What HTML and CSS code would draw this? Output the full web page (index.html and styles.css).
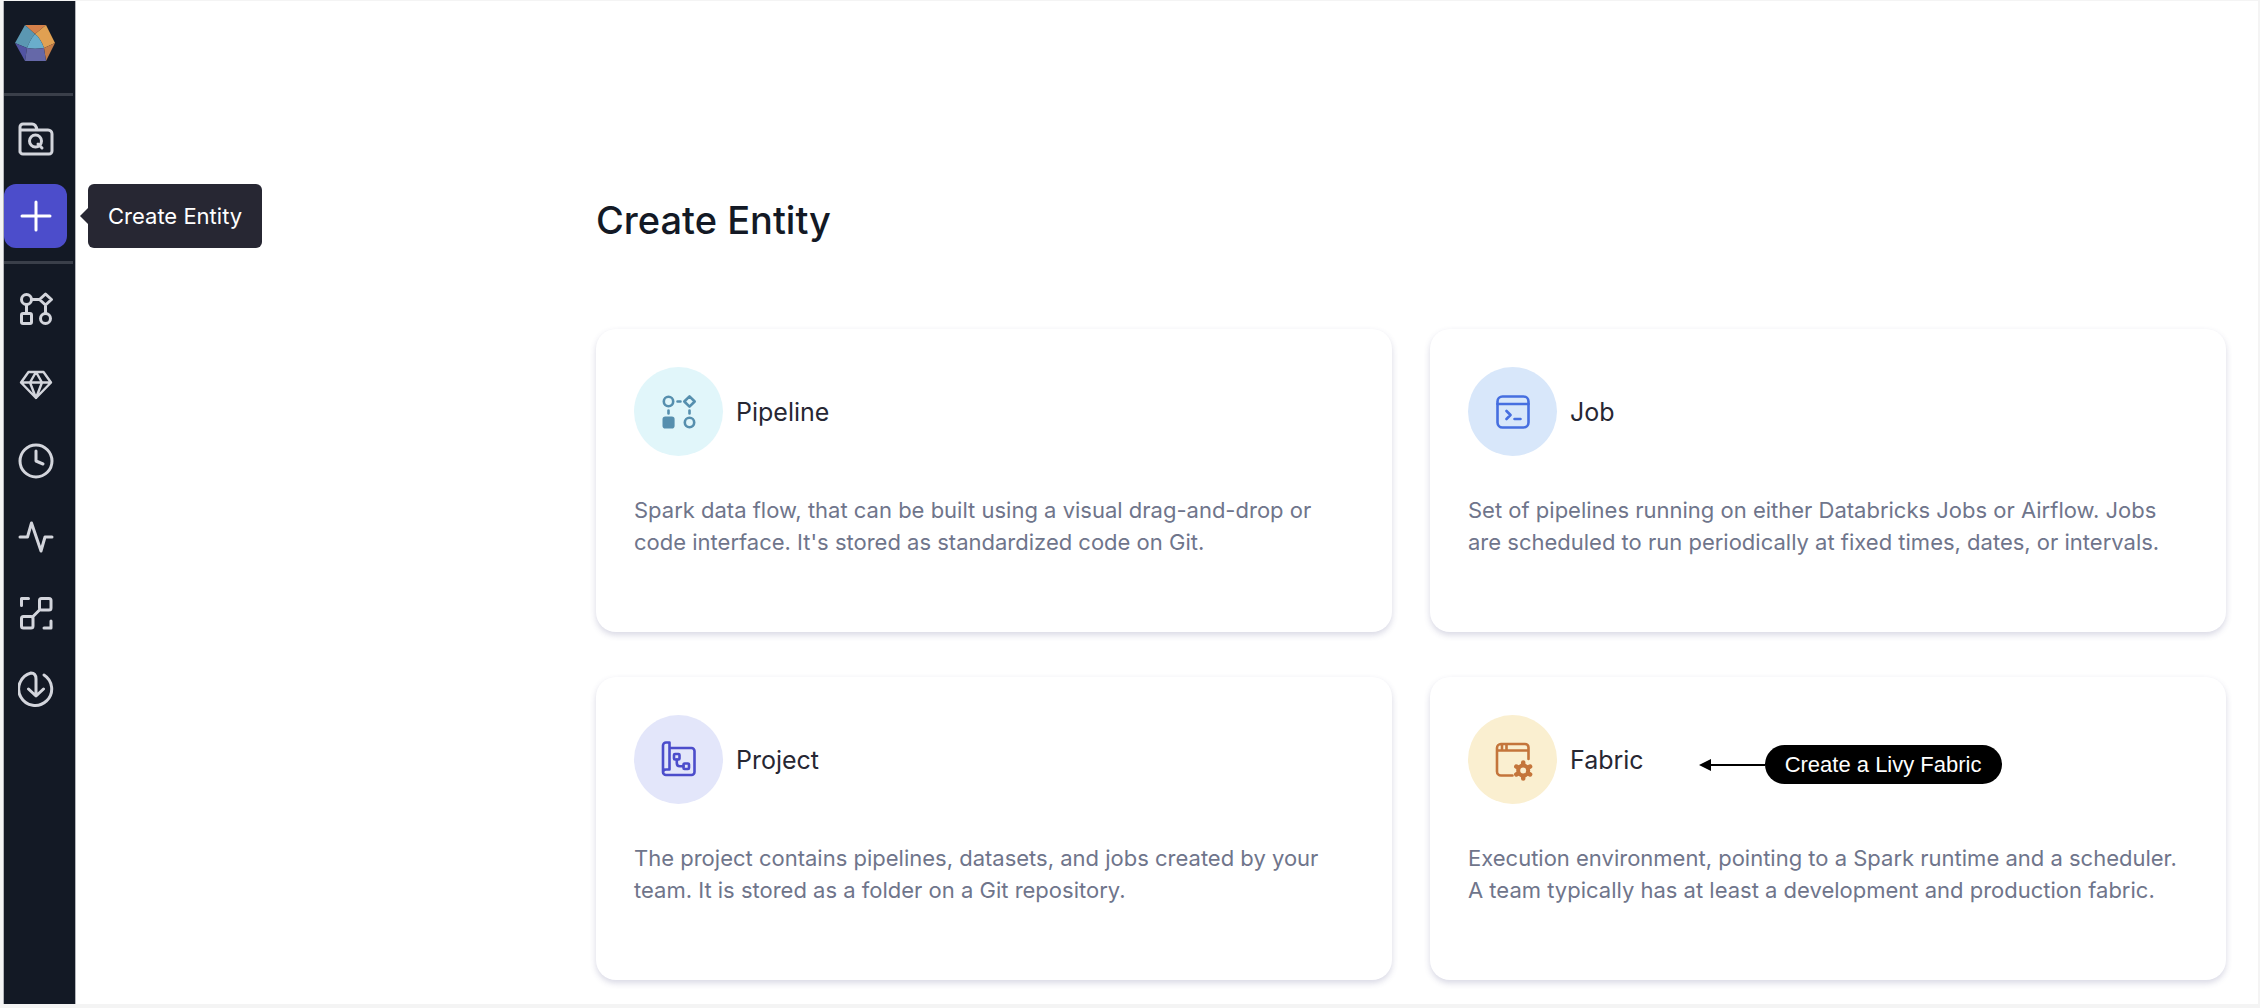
FILE: index.html
```html
<!DOCTYPE html>
<html lang="en">
<head>
<meta charset="utf-8">
<title>Create Entity</title>
<link rel="stylesheet" href="styles.css">
</head>
<body>
<div class="app">
  <nav class="sidebar" aria-label="Main">
    <a class="logo" href="#" aria-label="Home">
      <svg width="42" height="38" viewBox="0 0 42 38">
        <path fill="#d5804a" d="M11 1h21L21 10z"/>
        <path fill="#e0a052" d="M32 1l9 18-11 5C28 18 25 13 21 10z"/>
        <path fill="#c37c48" d="M41 19L32 37l-2-13z"/>
        <path fill="#5b97b2" d="M11 1l10 9c-4 4-6 9-8 14L1 19z"/>
        <path fill="#6aadcb" d="M21 10c4 3 7 8 9 14-6 1-12 1-17 0 2-5 4-10 8-14z"/>
        <path fill="#5254a2" d="M1 19l12 5-2 13z"/>
        <path fill="#6568a8" d="M13 24c5 1 11 1 17 0l2 13H11z"/>
      </svg>
    </a>
    <div class="nav-group">
      <a class="nav-item" href="#" aria-label="Browse">
        <svg class="nav-icon" viewBox="0 0 36 36"><path d="M2 30V5a3 3 0 0 1 3-3h9q4 0 5 6h11a4 4 0 0 1 4 4v17a3 3 0 0 1-3 3H5a3 3 0 0 1-3-3zM2 8h17"/><circle cx="17.500" cy="19" r="6"/><path d="M20 22l4 4"/></svg>
      </a>
      <button class="nav-item active" type="button" aria-label="Create" aria-describedby="create-tip">
        <svg class="nav-icon" viewBox="0 0 36 36"><path d="M18 4v28M4 18h28"/></svg>
        <span class="tooltip" id="create-tip" role="tooltip">Create Entity</span>
      </button>
    </div>
    <div class="nav-group">
      <a class="nav-item" href="#" aria-label="Pipelines">
        <svg class="nav-icon" viewBox="0 0 36 36"><circle cx="8.500" cy="8.500" r="5"/><circle cx="27.500" cy="27.500" r="5"/><rect x="3.500" y="22.500" width="10" height="10" rx="1.500"/><path d="M27.500 3l6 5.500-6 5.500-6-5.500zM13.500 8.500h8M8.500 13.500v9M27.500 14v8.500"/></svg>
      </a>
      <a class="nav-item" href="#" aria-label="Gems">
        <svg class="nav-icon thin" viewBox="0 0 36 36"><path d="M10.500 5h15L33 15.500 18 31 3 15.500zM3 15.500h30M18 5l-6 10.500L18 31l6-15.500z"/></svg>
      </a>
      <a class="nav-item" href="#" aria-label="Jobs">
        <svg class="nav-icon" viewBox="0 0 36 36"><circle cx="18" cy="18" r="16"/><path d="M18 8v10l7 3"/></svg>
      </a>
      <a class="nav-item" href="#" aria-label="Monitoring">
        <svg class="nav-icon" viewBox="0 0 36 36"><path d="M2 18h7.500L13.500 4 23 32l4-14h7"/></svg>
      </a>
      <a class="nav-item" href="#" aria-label="Lineage">
        <svg class="nav-icon" viewBox="0 0 36 36"><rect x="21.500" y="3.500" width="11.500" height="11.500" rx="2"/><rect x="3.500" y="21.500" width="11.500" height="11.500" rx="2"/><path d="M15 21.500l6.500-6.500M3.500 10.500v-7h7M33 26v7h-7"/></svg>
      </a>
      <a class="nav-item" href="#" aria-label="Downloads">
        <svg class="nav-icon" viewBox="0 0 36 36"><path d="M18 24V8q0-6-5-6A16.500 16.500 0 1 0 26 4M10.500 18l7.500 7 7.500-7"/></svg>
      </a>
    </div>
  </nav>

  <main class="content">
    <h1 class="title">Create Entity</h1>
    <div class="cards">
      <article class="card">
        <header class="card-head">
          <span class="badge teal">
            <svg viewBox="0 0 40 40"><circle cx="9.500" cy="9.500" r="4.700"/><circle cx="30.500" cy="30.500" r="4.700"/><rect x="4.800" y="25.800" width="9.500" height="9.500" rx="1.500" fill="currentColor"/><path d="M30.500 4.300l5.200 5.200-5.200 5.200-5.200-5.200zM18.500 9.500h3M9.500 18.500v3M30.500 18.500v3"/></svg>
          </span>
          <h2 class="card-title">Pipeline</h2>
        </header>
        <p class="card-text">Spark data flow, that can be built using a visual drag-and-drop or code interface. It's stored as standardized code on Git.</p>
      </article>
      <article class="card">
        <header class="card-head">
          <span class="badge blue">
            <svg viewBox="0 0 40 40"><rect x="4.500" y="4.500" width="31" height="31" rx="5"/><path d="M4.500 12h31M13.500 19l4 4-4 4M21.500 27h6"/></svg>
          </span>
          <h2 class="card-title">Job</h2>
        </header>
        <p class="card-text">Set of pipelines running on either Databricks Jobs or Airflow. Jobs are scheduled to run periodically at fixed times, dates, or intervals.</p>
      </article>
      <article class="card">
        <header class="card-head">
          <span class="badge indigo">
            <svg viewBox="0 0 40 40"><path d="M10.500 8h22a3 3 0 0 1 3 3v21a3 3 0 0 1-3 3H7a3 3 0 0 1-3-3V5.500a3 3 0 0 1 3-3h3.500v27H7a3 3 0 0 0-3 3"/><rect x="15" y="14" width="5.500" height="5.500" rx="1"/><rect x="24.500" y="23.500" width="5.500" height="5.500" rx="1"/><path d="M17.800 19.500v3.500q0 3.300 3 3.300h3.700"/></svg>
          </span>
          <h2 class="card-title">Project</h2>
        </header>
        <p class="card-text">The project contains pipelines, datasets, and jobs created by your team. It is stored as a folder on a Git repository.</p>
      </article>
      <article class="card">
        <header class="card-head">
          <span class="badge amber">
            <svg viewBox="0 0 40 40"><path d="M19.500 35.500H8a4 4 0 0 1-4-4V8a4 4 0 0 1 4-4h24a3.500 3.500 0 0 1 3.500 3.500V19M4 10.500h31M9 5v5M13.500 5v5"/><circle cx="30.200" cy="30.500" r="5" stroke-width="4"/><path stroke-width="4.500" d="M30.200 24v-1.500M30.200 37v1.500M24.600 27.200l-1.300-.7M35.800 33.800l1.300.7M35.800 27.200l1.300-.7M24.600 33.800l-1.300.7"/></svg>
          </span>
          <h2 class="card-title">Fabric</h2>
          <span class="callout">
            <svg class="callout-arrow" width="66" height="14" viewBox="0 0 66 14"><path d="M0 7L12 1v12z"/><path d="M10 6h56v2H10z"/></svg>
            <span class="callout-label">Create a Livy Fabric</span>
          </span>
        </header>
        <p class="card-text">Execution environment, pointing to a Spark runtime and a scheduler. A team typically has at least a development and production fabric.</p>
      </article>
    </div>
  </main>
</div>
</body>
</html>
```
FILE: styles.css
```css
* {
  box-sizing: border-box;
}

body {
  margin: 0;
  padding: 1px 2px 4px 3px;
  min-height: 100vh;
  display: flex;
  background: #f4f4f4;
  color: #272733;
  font-family: Inter, "Liberation Sans", sans-serif;
}

.app {
  flex: 1;
  display: flex;
  background: #fff;
}

.sidebar {
  flex: none;
  width: 73px;
  background: #131925;
  border: solid #b4b6bb;
  border-width: 0 1px;
}

.logo {
  display: flex;
  height: 92px;
  padding: 23px 0 0 10px;
}

.nav-group {
  display: flex;
  flex-direction: column;
  gap: 12px;
  margin-right: 2px;
  padding: 12px 0 13px;
  border-top: 3px solid #3a3f4a;
}

.nav-group:last-child {
  padding-top: 13px;
}

.nav-item {
  position: relative;
  display: flex;
  align-items: center;
  justify-content: center;
  width: 63px;
  height: 64px;
  padding: 0;
  border: 0;
  border-radius: 12px;
  background: none;
  color: #d3d5dc;
  font: inherit;
}

.nav-item.active {
  background: #4c4dcb;
  color: #fff;
}

.nav-icon {
  width: 36px;
  height: 36px;
  fill: none;
  stroke: currentColor;
  stroke-width: 3;
  stroke-linecap: round;
  stroke-linejoin: round;
}

.thin {
  stroke-width: 2.400;
}

.tooltip {
  position: absolute;
  left: 84px;
  top: 0;
  padding: 0 20px;
  border-radius: 6px;
  background: #272733;
  color: #fff;
  font-size: 22px;
  line-height: 64px;
  white-space: nowrap;
}

.tooltip::before {
  content: "";
  position: absolute;
  left: -8px;
  top: 24px;
  border: solid transparent;
  border-width: 8px 8px 8px 0;
  border-right-color: #272733;
}

.content {
  flex: 1;
  padding: 195px 32px 24px 520px;
}

.title {
  margin: 0 0 85px;
  color: #131925;
  font-size: 38px;
  font-weight: 500;
  line-height: 48px;
}

.cards {
  display: grid;
  grid-template-columns: 1fr 1fr;
  gap: 45px 38px;
}

.card {
  min-height: 303px;
  padding: 38px;
  border-radius: 20px;
  background: #fff;
  box-shadow: 0 3px 6px rgba(60, 60, 120, 0.2);
}

.card-head {
  display: flex;
  align-items: center;
  gap: 13px;
}

.badge {
  display: flex;
  align-items: center;
  justify-content: center;
  width: 89px;
  height: 89px;
  border-radius: 50%;
}

.badge svg {
  width: 40px;
  height: 40px;
  overflow: visible;
  fill: none;
  stroke: currentColor;
  stroke-width: 2.600;
  stroke-linecap: round;
  stroke-linejoin: round;
}

.teal {
  background: #e1f6fa;
  color: #568fae;
}

.blue {
  background: #d8e7fa;
  color: #466fe0;
}

.indigo {
  background: #e3e6fa;
  color: #4c4dcb;
}

.amber {
  background: #faefd0;
  color: #c4753b;
}

.card-title {
  margin: 0;
  font-size: 25px;
  font-weight: 400;
  line-height: 32px;
}

.card-text {
  margin: 38px 0 0;
  color: #6f758b;
  font-size: 22px;
  line-height: 32px;
}

.callout {
  display: flex;
  align-items: center;
  margin: 10px 0 0 42px;
}

.callout-arrow {
  fill: #000;
}

.callout-label {
  padding: 0 20px;
  border-radius: 20px;
  background: #000;
  color: #fff;
  font-family: "Liberation Sans", Arial, sans-serif;
  font-size: 22px;
  line-height: 39px;
  white-space: nowrap;
}
```
